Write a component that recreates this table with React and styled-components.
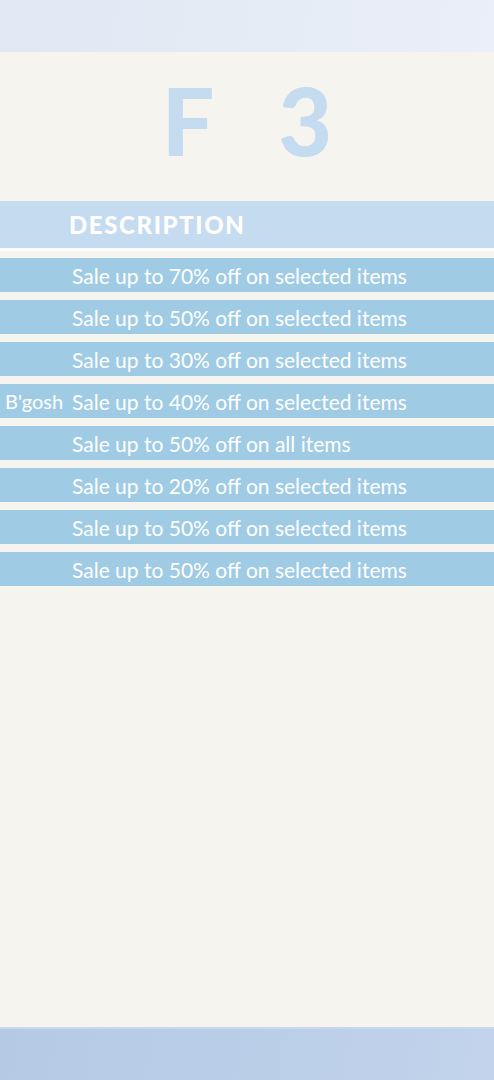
import React from 'react'
import styled, { createGlobalStyle } from 'styled-components'

const GlobalStyle = createGlobalStyle`
  html, body {
    margin: 0;
    padding: 0;
    background: #f5f4ef;
  }
  body {
    font-family: Lato, "Open Sans", sans-serif;
  }
`

const Page = styled.div`
  min-height: 100vh;
  display: flex;
  flex-direction: column;
`

const TopBand = styled.header`
  height: 52px;
  background: linear-gradient(100deg, #e1e8f3 0%, #e6ecf6 60%, #eaeff9 100%);
`

const Main = styled.main`
  flex: 1;
  display: flex;
  flex-direction: column;
`

const Title = styled.h1`
  margin: 0;
  height: 149px;
  display: flex;
  justify-content: center;
  align-items: center;
  padding-bottom: 14px;
  box-sizing: border-box;
  font-family: Lato, sans-serif;
  font-weight: 900;
  font-size: 93px;
  color: #c5dbf0;
  word-spacing: 44px;
`

const Table = styled.div`
  display: flex;
  flex-direction: column;
  gap: 8px;
`

const HeaderRow = styled.div`
  height: 47px;
  background: #c5dbf0;
  border-bottom: 3px solid #fbfbf9;
  margin-bottom: -1px;
  display: flex;
  align-items: center;
  padding-left: 69px;
  color: #fff;
  font-family: Lato, sans-serif;
  font-weight: 900;
  font-size: 24px;
  letter-spacing: 1.6px;
`

const Row = styled.div`
  height: 34px;
  background: #9fcbe5;
  display: grid;
  grid-template-columns: 72px 1fr;
  align-items: center;
  color: #fff;
  font-size: 21px;
  white-space: nowrap;
`

const Brand = styled.span`
  padding-left: 5px;
  font-size: 20px;
`

const Footer = styled.footer`
  height: 51px;
  border-top: 2px solid #c9d8ee;
  background: linear-gradient(100deg, #b5c9e5 0%, #bccfe9 60%, #c2d3eb 100%);
`

const rows = [
  { brand: '', text: 'Sale up to 70% off on selected items' },
  { brand: '', text: 'Sale up to 50% off on selected items' },
  { brand: '', text: 'Sale up to 30% off on selected items' },
  { brand: "B'gosh", text: 'Sale up to 40% off on selected items' },
  { brand: '', text: 'Sale up to 50% off on all items' },
  { brand: '', text: 'Sale up to 20% off on selected items' },
  { brand: '', text: 'Sale up to 50% off on selected items' },
  { brand: '', text: 'Sale up to 50% off on selected items' }
]

export default function App () {
  return (
    <Page>
      <GlobalStyle />
      <TopBand />
      <Main>
        <Title>F 3</Title>
        <Table>
          <HeaderRow>DESCRIPTION</HeaderRow>
          {rows.map((r, i) => (
            <Row key={i}>
              <Brand>{r.brand}</Brand>
              <span>{r.text}</span>
            </Row>
          ))}
        </Table>
      </Main>
      <Footer />
    </Page>
  )
}
